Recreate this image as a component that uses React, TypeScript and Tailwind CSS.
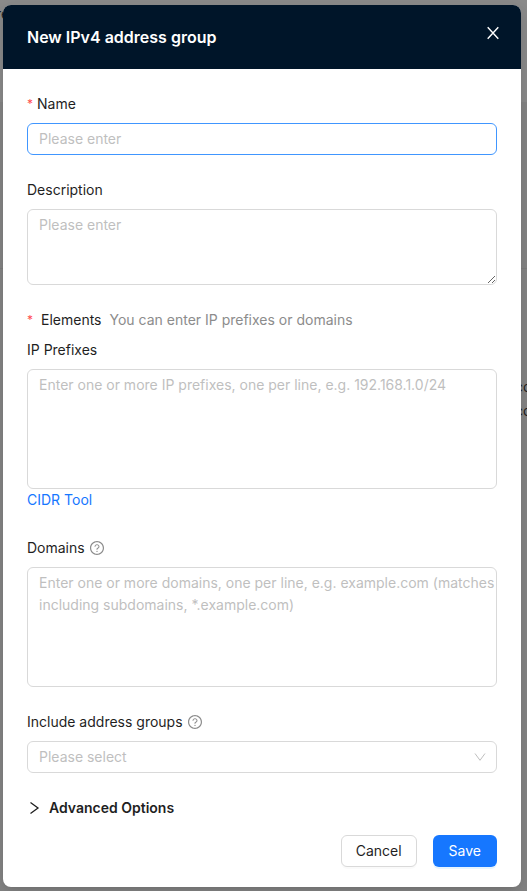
import React, { ReactNode, useState } from 'react';

interface FieldProps {
  id: string;
  label: string;
  required?: boolean;
  help?: boolean;
  children: ReactNode;
}

const controlClass =
  'block w-full rounded-md border bg-white py-1 pl-[11px] pr-0 text-sm leading-[22px] outline-none placeholder:text-[#bfbfbf]';

const HelpIcon = () => (
  <svg viewBox="0 0 1024 1024" className="h-4 w-4 text-[#8c8c8c]" fill="currentColor" aria-hidden="true">
    <path d="M512 64C264.600 64 64 264.600 64 512s200.600 448 448 448 448-200.600 448-448S759.400 64 512 64zm0 820c-205.400 0-372-166.600-372-372s166.600-372 372-372 372 166.600 372 372-166.600 372-372 372z" />
    <path d="M623.600 316.700C593.600 290.400 554 276 512 276s-81.600 14.500-111.600 40.700C369.200 344 352 380.700 352 420v7.600c0 4.400 3.600 8 8 8h48c4.400 0 8-3.600 8-8V420c0-44.100 43.100-80 96-80s96 35.900 96 80c0 31.100-22 59.600-56.100 72.700-21.200 8.100-39.200 22.300-52.100 40.900-13.100 19-19.900 41.800-19.900 64.900V620c0 4.400 3.600 8 8 8h48c4.400 0 8-3.600 8-8v-22.700a48.300 48.300 0 0 1 30.900-44.800c59-22.700 97.100-74.700 97.100-132.500.1-39.300-17.100-76-48.300-103.300zM472 732a40 40 0 1 0 80 0 40 40 0 1 0-80 0z" />
  </svg>
);

const RequiredMark = () => <span className="text-xs leading-[22px] text-[#ff4d4f]">*</span>;

const Field = ({ id, label, required, help, children }: FieldProps) => (
  <div>
    <div className="mb-2 flex items-center gap-1 leading-[22px]">
      <label htmlFor={id} className="flex gap-1">
        {required && <RequiredMark />}
        {label}
      </label>
      {help && <HelpIcon />}
    </div>
    {children}
  </div>
);

export default function App() {
  const [advancedOpen, setAdvancedOpen] = useState(false);

  return (
    <div className="relative min-h-screen overflow-hidden bg-[#868686] pt-[5px] pr-1.5 pb-1 pl-[3px] font-['Inter',sans-serif] text-sm text-[#1f1f1f]">
      {/* dimmed page behind the dialog */}
      <div className="absolute inset-x-0 top-0 h-[102px] bg-[#8c8c8c]" />
      <div className="absolute inset-x-0 top-[268px] h-px bg-[#7e7e7e]" />
      <span className="absolute top-[3px] -left-1 leading-[22px]">re</span>
      <div className="absolute top-[375px] right-0 w-3 overflow-hidden leading-[24px]">
        <div>co</div>
        <div>co</div>
      </div>

      <div
        role="dialog"
        aria-labelledby="dialog-title"
        className="relative overflow-hidden rounded-lg bg-white shadow-[0_6px_16px_0_rgba(0,0,0,0.08),0_3px_6px_-4px_rgba(0,0,0,0.12),0_9px_28px_8px_rgba(0,0,0,0.05)]"
      >
        <header className="flex h-16 items-center justify-between bg-[#001529] px-6 text-white">
          <h2 id="dialog-title" className="text-base font-semibold">
            New IPv4 address group
          </h2>
          <button type="button" aria-label="Close" className="-mr-2 mb-2 flex h-6 w-6 items-center justify-center">
            <svg viewBox="0 0 16 16" className="h-4 w-4" fill="none" stroke="currentColor" strokeWidth="1.400">
              <path d="M2.700 2.200 13.300 13.800M13.300 2.200 2.700 13.800" />
            </svg>
          </button>
        </header>

        <form className="px-6 pt-6 pb-5" onSubmit={(e) => e.preventDefault()}>
          <div className="flex flex-col gap-6">
            <Field id="name" label="Name" required>
              <input id="name" type="text" placeholder="Please enter" className={`${controlClass} border-[#4096ff]`} />
            </Field>

            <Field id="description" label="Description">
              <textarea
                id="description"
                placeholder="Please enter"
                className={`${controlClass} h-[76px] resize-y border-[#d9d9d9]`}
              />
            </Field>

            <div className="pb-0.5">
              <div className="mb-2 flex gap-2 leading-[22px]">
                <RequiredMark />
                <span>Elements</span>
                <span className="text-[#8c8c8c]">You can enter IP prefixes or domains</span>
              </div>
              <Field id="prefixes" label="IP Prefixes">
                <textarea
                  id="prefixes"
                  placeholder="Enter one or more IP prefixes, one per line, e.g. 192.168.1.0/24"
                  className={`${controlClass} h-[120px] resize-none border-[#d9d9d9]`}
                />
              </Field>
              <a href="#cidr" className="block w-fit leading-[22px] text-[#1677ff]">
                CIDR Tool
              </a>
            </div>

            <Field id="domains" label="Domains" help>
              <textarea
                id="domains"
                placeholder="Enter one or more domains, one per line, e.g. example.com (matches including subdomains, *.example.com)"
                className={`${controlClass} h-[120px] resize-none border-[#d9d9d9]`}
              />
            </Field>

            <Field id="groups" label="Include address groups" help>
              <div className="relative">
                <select
                  id="groups"
                  defaultValue=""
                  className={`${controlClass} appearance-none border-[#d9d9d9] text-[#bfbfbf]`}
                >
                  <option value="">Please select</option>
                </select>
                <svg
                  viewBox="0 0 12 12"
                  className="pointer-events-none absolute top-2.5 right-[11px] h-3 w-3 text-[#bfbfbf]"
                  fill="none"
                  stroke="currentColor"
                >
                  <path d="M1 2.500 6 9.300 11 2.500" />
                </svg>
              </div>
            </Field>

            <button
              type="button"
              aria-expanded={advancedOpen}
              onClick={() => setAdvancedOpen(!advancedOpen)}
              className="flex w-fit items-center gap-2 leading-[22px] font-semibold"
            >
              <svg viewBox="0 0 14 14" className="h-3.5 w-3.5" fill="none" stroke="currentColor" strokeWidth="1.300">
                <path d="M3.500 1.500 11 7 3.500 12.500" />
              </svg>
              Advanced Options
            </button>
          </div>

          <div className="mt-4 flex justify-end gap-4">
            <button
              type="button"
              className="h-8 rounded-md border border-[#d9d9d9] bg-white px-3.5 shadow-[0_2px_0_rgba(0,0,0,0.02)]"
            >
              Cancel
            </button>
            <button
              type="submit"
              className="h-8 rounded-md bg-[#1677ff] px-4 text-white shadow-[0_2px_0_rgba(5,145,255,0.1)]"
            >
              Save
            </button>
          </div>
        </form>
      </div>
    </div>
  );
}
